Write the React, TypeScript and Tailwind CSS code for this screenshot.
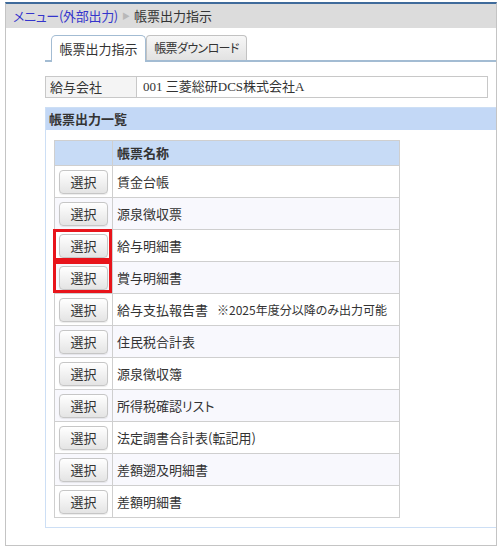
import React from "react";

type ReportRow = {
  name: string;
  note?: string;
  marked?: boolean;
};

const reports: ReportRow[] = [
  { name: "賃金台帳" },
  { name: "源泉徴収票" },
  { name: "給与明細書", marked: true },
  { name: "賞与明細書", marked: true },
  { name: "給与支払報告書", note: "※2025年度分以降のみ出力可能" },
  { name: "住民税合計表" },
  { name: "源泉徴収簿" },
  { name: "所得税確認リスト" },
  { name: "法定調書合計表(転記用)" },
  { name: "差額遡及明細書" },
  { name: "差額明細書" },
];

const jp = "font-['Noto_Sans_CJK_JP','Noto_Sans',sans-serif] [font-feature-settings:'palt']";

function SelectButton() {
  return (
    <button
      type="button"
      className="flex h-[24px] w-[49px] items-center justify-center rounded-[4px] border border-[#c6c6c6] bg-gradient-to-b from-[#ffffff] to-[#e4e4e4] text-[13px] text-[#333] shadow-[0_1px_1px_rgba(0,0,0,0.08)]"
    >
      選択
    </button>
  );
}

export default function App() {
  return (
    <div className={`h-[549px] w-[501px] bg-white ${jp} text-[#333]`}>
      <div className="ml-[5px] mt-[2px] flex h-[544px] w-[492px] flex-col border-x border-b border-t-2 border-x-[#c4c4c4] border-b-[#c4c4c4] border-t-[#3f6b9b]">
        {/* breadcrumb bar */}
        <div className="flex h-[24px] items-center gap-[4px] bg-[#dcdcdc] pl-[7px] text-[13px] whitespace-nowrap">
          <span className="tracking-[-0.3px] text-[#3535cc]">メニュー(外部出力)</span>
          <span className="text-[8px] text-[#b8b8b8]">▶</span>
          <span className="text-[#333]">帳票出力指示</span>
        </div>

        <div className="ml-[39px] flex flex-1 flex-col">
          {/* tabs */}
          <div className="mt-[7px] flex border-b-2 border-[#a3bcd3] pl-[6px] whitespace-nowrap">
            <div className="relative -mb-[2px] flex h-[27px] w-[95px] items-center justify-center rounded-t-[5px] border border-b-0 border-[#a3bcd3] bg-white text-[13px]">
              帳票出力指示
            </div>
            <div className="flex h-[25px] w-[101px] items-center justify-center rounded-t-[4px] border border-b-0 border-[#c2c2c2] bg-gradient-to-b from-[#f7f7f7] to-[#e2e2e2] text-[12px] tracking-[-0.6px]">
              帳票ダウンロード
            </div>
          </div>

          {/* company */}
          <div className="mt-[14px] flex h-[22px] w-[443px] border border-[#c8c8c8] text-[13px] whitespace-nowrap">
            <div className="flex w-[91px] items-center border-r border-[#c8c8c8] bg-[#f4f4f4] pl-[4px]">
              給与会社
            </div>
            <div className="flex items-center pl-[6px] font-['Liberation_Serif','Noto_Sans_CJK_JP',serif]">
              001 三菱総研DCS株式会社A
            </div>
          </div>

          {/* report list panel */}
          <div className="mt-[9px] border-b border-l border-t border-[#cddff5] pb-[9px]">
            <div className="flex h-[22px] items-center bg-[#c3d8f6] pl-[3px] text-[13px] font-bold">
              帳票出力一覧
            </div>
            <table className="ml-[8px] mt-[10px] w-[346px] table-fixed border-collapse text-[13px]">
              <thead>
                <tr className="h-[25px] bg-[#c7dbf6]">
                  <th className="w-[58px] border border-[#cfcfcf]" />
                  <th className="border border-[#cfcfcf] pl-[4px] text-left font-bold">帳票名称</th>
                </tr>
              </thead>
              <tbody>
                {reports.map((row, i) => (
                  <tr key={row.name} className={`h-[32px] ${i % 2 === 1 ? "bg-[#f8f8fd]" : "bg-white"}`}>
                    <td className="relative border border-[#cfcfcf] pl-[4px]">
                      <SelectButton />
                      {row.marked && (
                        <span className="pointer-events-none absolute -left-[2px] -top-px bottom-0 right-0 border-[3px] border-[#e8141b]" />
                      )}
                    </td>
                    <td className="whitespace-nowrap border border-[#cfcfcf] pl-[4px]">
                      {row.name}
                      {row.note && <span className="ml-[9px] text-[12px]">{row.note}</span>}
                    </td>
                  </tr>
                ))}
              </tbody>
            </table>
          </div>
        </div>
      </div>
    </div>
  );
}
